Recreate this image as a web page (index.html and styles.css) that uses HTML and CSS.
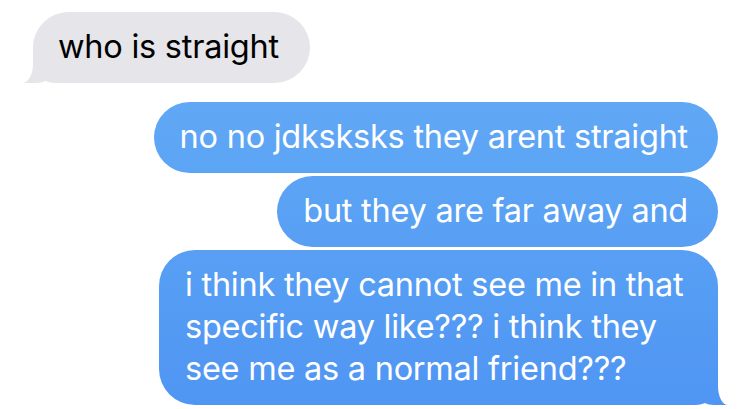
FILE: index.html
```html
<!DOCTYPE html>
<html lang="en">
<head>
<meta charset="utf-8">
<title>Messages</title>
<link rel="stylesheet" href="styles.css">
</head>
<body>
<main class="thread">
  <div class="bubble bubble--them bubble--tail">who is straight</div>
  <div class="group group--me">
    <div class="bubble bubble--me">no no jdksksks they arent straight</div>
    <div class="bubble bubble--me">but they are far away and</div>
    <div class="bubble bubble--me bubble--wrap bubble--tail">i think they cannot see me in that specific way like??? i think they see me as a normal friend???</div>
  </div>
</main>
</body>
</html>
```

FILE: styles.css
```css
html, body {
  margin: 0;
  padding: 0;
  background: #ffffff;
}

.thread {
  width: 750px;
  height: 409px;
  overflow: hidden;
  display: flex;
  flex-direction: column;
  padding-top: 12px;
  box-sizing: border-box;
  font-family: "Inter", "Noto Sans", sans-serif;
  font-size: 32.5px;
  line-height: 42px;
  letter-spacing: -0.25px;
}

.bubble {
  position: relative;
  box-sizing: border-box;
  padding: 14px 31px 15px 25px;
  border-radius: 36px;
  white-space: nowrap;
}

.bubble--them {
  align-self: flex-start;
  margin-left: 33px;
  background: #e5e5ea;
  color: #000000;
}

.group {
  display: flex;
  flex-direction: column;
  align-items: flex-end;
  gap: 3px;
  margin-top: 19px;
  margin-right: 32px;
}

.bubble--me {
  color: #ffffff;
  padding-left: 26px;
  padding-right: 30px;
  background: linear-gradient(180deg, #66aef6 0px, #5ea6f5 140px, #4f95f3 409px) fixed;
}

.bubble--wrap {
  white-space: normal;
  width: 559px;
  padding-right: 24px;
}

/* tails */
.bubble--them.bubble--tail {
  border-bottom-left-radius: 22px;
}

.bubble--me.bubble--tail {
  border-bottom-right-radius: 22px;
}

.bubble--tail::before,
.bubble--tail::after {
  content: "";
  position: absolute;
  bottom: 0;
  height: 24px;
}

.bubble--me.bubble--tail::before {
  right: -10px;
  width: 28px;
  background: linear-gradient(180deg, #66aef6 0px, #5ea6f5 140px, #4f95f3 409px) fixed;
  border-bottom-left-radius: 14px 8px;
}

.bubble--me.bubble--tail::after {
  right: -50px;
  width: 50px;
  background: #ffffff;
  border-bottom-left-radius: 10px 19px;
}

.bubble--them.bubble--tail::before {
  left: -11px;
  width: 28px;
  background: #e5e5ea;
  border-bottom-right-radius: 14px 8px;
}

.bubble--them.bubble--tail::after {
  left: -50px;
  width: 50px;
  background: #ffffff;
  border-bottom-right-radius: 11px 19px;
}
```
